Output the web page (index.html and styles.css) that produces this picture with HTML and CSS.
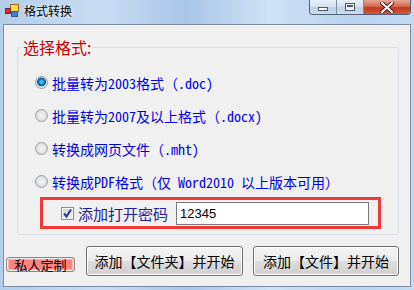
FILE: index.html
```html
<!DOCTYPE html>
<html lang="zh-CN">

<head>
  <meta charset="UTF-8">
  <title>格式转换</title>
  <link rel="stylesheet" href="styles.css">
</head>

<body>
  <div class="window">

    <header class="titlebar">
      <svg class="app-icon" width="14" height="13" viewBox="0 0 14 13">
        <rect x="5.5" y="0.5" width="8" height="7" fill="#ffd84a" stroke="#a06a20"/>
        <rect x="6.5" y="7.5" width="6" height="5" fill="#3b7fd6" stroke="#3a5a8a"/>
        <rect x="0.5" y="4.5" width="5" height="5" fill="#e02a1a" stroke="#7a2a20"/>
      </svg>
      <span class="title">格式转换</span>
      <div class="caption">
        <span class="cap min"><i></i></span>
        <span class="cap max"><i></i></span>
        <span class="cap close">
          <svg width="14" height="11" viewBox="0 0 14 11">
            <path d="M2 1 L12 10 M12 1 L2 10" stroke="#5a1a10" stroke-width="4" stroke-linecap="square"/>
            <path d="M2 1 L12 10 M12 1 L2 10" stroke="#fff" stroke-width="2" stroke-linecap="square"/>
          </svg>
        </span>
      </div>
    </header>

    <main class="client">
      <fieldset class="group">
        <legend>选择格式:</legend>

        <label class="option"><input type="radio" name="fmt" checked><span>批量转为2003格式（.doc)</span></label>
        <label class="option"><input type="radio" name="fmt"><span>批量转为2007及以上格式（.docx)</span></label>
        <label class="option"><input type="radio" name="fmt"><span>转换成网页文件（.mht)</span></label>
        <label class="option"><input type="radio" name="fmt"><span>转换成PDF格式（仅 Word2010 以上版本可用）</span></label>

        <div class="password">
          <label class="check">
            <span class="box">
              <svg width="11" height="11" viewBox="0 0 11 11">
                <path d="M2 5.5 L4.5 8.5 L9 1.5" fill="none" stroke="#2a3a9a" stroke-width="2"/>
              </svg>
            </span>
            添加打开密码
          </label>
          <input class="pwd" type="text" value="12345">
        </div>
      </fieldset>

      <div class="actions">
        <button class="custom">私人定制</button>
        <button class="btn folder">添加【文件夹】并开始</button>
        <button class="btn file">添加【文件】并开始</button>
      </div>
    </main>

  </div>
</body>

</html>
```

FILE: styles.css
```css
* {
  box-sizing: border-box;
}

body {
  margin: 0;
  font-family: "Noto Sans CJK SC", sans-serif;
}

.window {
  width: 414px;
  height: 290px;
  display: flex;
  flex-direction: column;
  padding: 0 3px 3px 3px;
  background: linear-gradient(to right, #b3cdea 0%, #c8dcf2 25%, #a9c6e7 45%, #cfe1f4 65%, #b9d3ee 85%, #c4daf1 100%);
}

/* title bar */
.titlebar {
  height: 24px;
  display: flex;
  align-items: flex-start;
  flex-shrink: 0;
}

.app-icon {
  margin: 4px 0 0 2px;
}

.title {
  margin-left: 5px;
  margin-top: 3px;
  font-size: 12px;
  line-height: 16px;
  color: #000;
  text-shadow: 0 0 4px #e8f2fc, 0 0 2px #e8f2fc;
}

.caption {
  margin-left: auto;
  display: flex;
  height: 15px;
  border: 1px solid #51627a;
  border-top: none;
  border-radius: 0 0 4px 4px;
  overflow: hidden;
}

.cap {
  display: flex;
  align-items: center;
  justify-content: center;
  height: 100%;
}

.min,
.max {
  width: 27px;
  background: linear-gradient(#e9f0f8, #d3e0ef 50%, #bfd0e4 51%, #cddcec);
  border-right: 1px solid #7b8ba0;
}

.min i {
  width: 10px;
  height: 4px;
  margin-top: 4px;
  background: #fff;
  border: 1px solid #4a586c;
}

.max i {
  width: 10px;
  height: 8px;
  border: 1px solid #4a586c;
  box-shadow: inset 0 0 0 1px #fff, inset 0 2px 0 1px #4a586c;
  background: #e8eef6;
}

.close {
  width: 46px;
  background: linear-gradient(#e5a796, #d66a52 45%, #c3391f 55%, #d4593c);
}

/* client area */
.client {
  flex: 1;
  background: #f0f0f0;
  border: 1px solid #7d8da1;
  display: flex;
  flex-direction: column;
}

.group {
  margin: 12px 11px 0 13px;
  padding: 9px 0 5px 0;
  border: 1px solid #d5dfe5;
  border-radius: 3px;
}

.group legend {
  margin-left: 3px;
  padding: 0 2px;
  font-size: 16px;
  line-height: 20px;
  color: #d00000;
}

.option {
  display: flex;
  align-items: center;
  gap: 4px;
  height: 33px;
  padding-left: 17px;
  font-family: "Noto Sans Mono CJK SC", "Noto Sans CJK SC", sans-serif;
  font-size: 14px;
  color: #0000e6;
}

.option input {
  appearance: none;
  margin: 0;
  width: 13px;
  height: 13px;
  border-radius: 50%;
  border: 1px solid #9a9fa3;
  background: radial-gradient(circle at 50% 50%, #f6f6f6 0, #e6e6e6 45%, #d0d0d0 100%);
}

.option input:checked {
  background: radial-gradient(circle at 50% 45%, #7fd0ff 0, #1b8fd6 30%, #0a4e8c 50%, #e2ecf4 58%, #c4cfd8 100%);
}

.password {
  display: flex;
  align-items: center;
  margin: -1px 0 0 22px;
  width: 341px;
  height: 32px;
  padding: 0 9px 0 18px;
  border: 3px solid #f03a3a;
}

.check {
  display: flex;
  align-items: center;
  gap: 4px;
  font-size: 15px;
  color: #22229a;
}

.box {
  display: flex;
  align-items: center;
  justify-content: center;
  width: 13px;
  height: 13px;
  border: 1px solid #8f8f8f;
  background: linear-gradient(135deg, #d0d0d0, #f4f4f4);
  box-shadow: inset 0 0 0 1px #f6f6f6;
}

.pwd {
  margin-left: auto;
  width: 193px;
  height: 23px;
  padding: 0 3px;
  border: 1px solid #7a7a7a;
  background: #fff;
  font-family: "Liberation Sans", sans-serif;
  font-size: 13px;
  color: #000;
}

/* buttons */
.actions {
  display: flex;
  align-items: flex-end;
  margin-top: 11px;
  padding-left: 2px;
}

.custom {
  width: 69px;
  height: 15px;
  margin: 0 11px 4px 0;
  padding: 0;
  border: 1px solid #8a8a8a;
  border-radius: 3px;
  background: #ff8080;
  box-shadow: inset 0 0 0 1px #ececec, inset 0 0 0 2px #f7b0b0;
  font-family: "Noto Sans CJK SC", sans-serif;
  font-size: 13px;
  line-height: 12px;
  color: #000;
}

.btn {
  height: 30px;
  padding: 0;
  border: 1px solid #707070;
  border-radius: 3px;
  background: linear-gradient(#f2f2f2, #ebebeb 50%, #dddddd 51%, #cfcfcf);
  box-shadow: inset 0 0 0 1px #fcfcfc;
  font-family: "Noto Sans CJK SC", sans-serif;
  font-size: 14px;
  color: #000;
}

.folder {
  width: 157px;
  margin-right: 10px;
}

.file {
  width: 146px;
}
```
